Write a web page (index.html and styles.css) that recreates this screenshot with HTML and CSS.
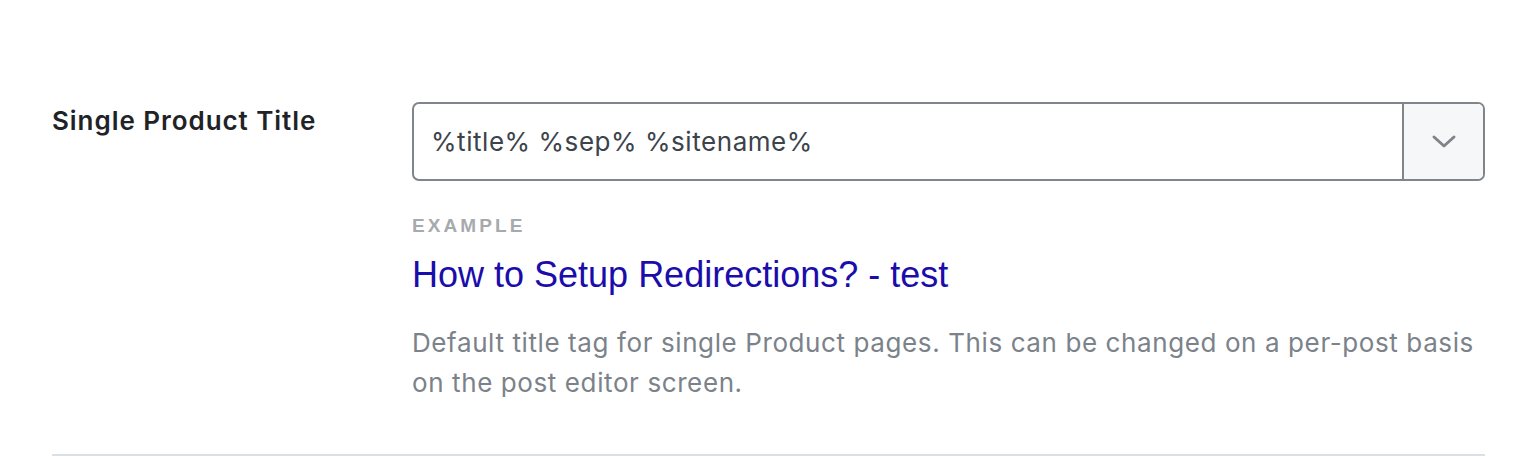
FILE: index.html
```html
<!DOCTYPE html>
<html lang="en">
<head>
<meta charset="utf-8">
<title>Single Product Title</title>
<link rel="stylesheet" href="styles.css">
</head>
<body>
<div class="page">
  <div class="row">
    <div class="label">Single Product Title</div>
    <div class="field">
      <div class="select">
        <div class="value">%title% %sep% %sitename%</div>
        <div class="toggle">
          <svg width="26" height="16" viewBox="0 0 26 16" aria-hidden="true"><path d="M3 3 L13 12 L23 3" fill="none" stroke="#80858b" stroke-width="3" stroke-linecap="round" stroke-linejoin="round"/></svg>
        </div>
      </div>
      <div class="example-label">EXAMPLE</div>
      <div class="example-link">How to Setup Redirections? - test</div>
      <p class="desc">Default title tag for single Product pages. This can be changed on a per-post basis on the post editor screen.</p>
    </div>
  </div>
  <div class="divider"></div>
</div>
</body>
</html>
```
FILE: styles.css
```css
html, body {
  margin: 0;
  padding: 0;
  background: #ffffff;
}
.page {
  padding: 102px 43px 0 52px;
  font-family: Inter, "Noto Sans", sans-serif;
}
.row {
  display: flex;
}
.label {
  width: 360px;
  flex: none;
  font-size: 26px;
  font-weight: 600;
  letter-spacing: 0.95px;
  color: #1f2328;
  line-height: 36px;
  padding-top: 1px;
}
.field {
  flex: 1;
}
.select {
  display: flex;
  height: 79px;
  box-sizing: border-box;
  border: 2px solid #80858b;
  border-radius: 7px;
  overflow: hidden;
}
.value {
  flex: 1;
  display: flex;
  align-items: center;
  padding-left: 17px;
  font-size: 26px;
  letter-spacing: 0.55px;
  color: #3c434a;
}
.toggle {
  width: 79px;
  flex: none;
  border-left: 2px solid #80858b;
  background: #f6f7f9;
  display: flex;
  align-items: center;
  justify-content: center;
}
.example-label {
  margin-top: 33px;
  font-family: "Liberation Sans", Arial, sans-serif;
  font-weight: 700;
  font-size: 19px;
  letter-spacing: 3.1px;
  color: #a7aaad;
  line-height: 24px;
}
.example-link {
  margin-top: 13px;
  font-family: "Liberation Sans", Arial, sans-serif;
  font-size: 36px;
  color: #1a0dab;
  line-height: 48px;
}
.desc {
  margin: 24px 0 0;
  font-size: 26px;
  letter-spacing: 0.6px;
  line-height: 40px;
  color: #7b828a;
}
.divider {
  margin-top: 51px;
  height: 2px;
  background: #dcdfe3;
}
```
